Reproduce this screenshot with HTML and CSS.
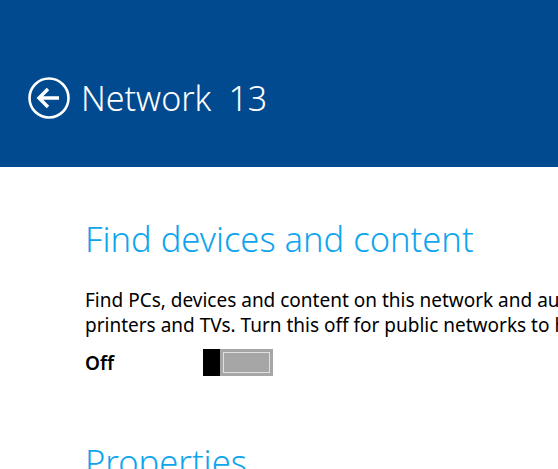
FILE: index.html
```html
<!DOCTYPE html>
<html lang="en">
<head>
    <meta charset="UTF-8">
    <title>Network 13</title>
    <link rel="stylesheet" href="styles.css">
</head>
<body>
<div id="page">
    <div id="header">
        <span class="back">
            <svg width="44" height="44" viewBox="0 0 44 44">
                <circle cx="22" cy="22" r="19.5" fill="none" stroke="#ffffff" stroke-width="2.6"/>
                <path d="M12 22 H32 M21 13 L12 22 L21 31" fill="none" stroke="#ffffff" stroke-width="3.4"/>
            </svg>
        </span>
        <h1 class="title">Network<span class="num">13</span></h1>
    </div>
    <div id="content">
        <h2 class="section">Find devices and content</h2>
        <p class="desc">Find PCs, devices and content on this network and automatically connect to devices like<br>printers and TVs. Turn this off for public networks to help protect your PC.</p>
        <div class="row">
            <span class="state">Off</span>
            <span class="toggle"><span class="thumb"></span><span class="track"></span></span>
        </div>
        <h2 class="section props">Properties</h2>
    </div>
</div>
</body>
</html>
```

FILE: styles.css
```css
* {
    margin: 0;
    padding: 0;
}

html, body {
    width: 558px;
    height: 469px;
    overflow: hidden;
    background-color: #ffffff;
}

#page {
    font-family: "Noto Sans", "Open Sans", sans-serif;
    color: #000000;
}

#header {
    height: 167px;
    background-color: #014a8f;
    display: flex;
    align-items: center;
    padding-left: 27px;
    padding-top: 29px;
    box-sizing: border-box;
}

#header .back {
    display: flex;
    width: 44px;
    height: 44px;
}

#header .title {
    font-weight: 300;
    font-size: 34px;
    color: #ffffff;
    margin-left: 10px;
    white-space: nowrap;
}

#header .num {
    margin-left: 17px;
}

#content {
    padding-left: 85px;
    padding-top: 48px;
}

.section {
    font-weight: 300;
    font-size: 34.5px;
    color: #0fa5ee;
    line-height: 48px;
    white-space: nowrap;
}

.desc {
    margin-top: 25px;
    font-size: 19px;
    line-height: 25px;
    white-space: nowrap;
}

.row {
    display: flex;
    align-items: center;
    margin-top: 11px;
    height: 27px;
}

.state {
    width: 118px;
    font-size: 19px;
    font-weight: 600;
}

.toggle {
    display: flex;
    width: 70px;
    height: 27px;
}

.toggle .thumb {
    width: 17px;
    height: 27px;
    background-color: #000000;
}

.toggle .track {
    flex: 1;
    border: 3px solid #a6a6a6;
    background-color: #a6a6a6;
    box-shadow: inset 0 0 0 1px #e0e0e0;
}

.props {
    margin-top: 62px;
}
```
